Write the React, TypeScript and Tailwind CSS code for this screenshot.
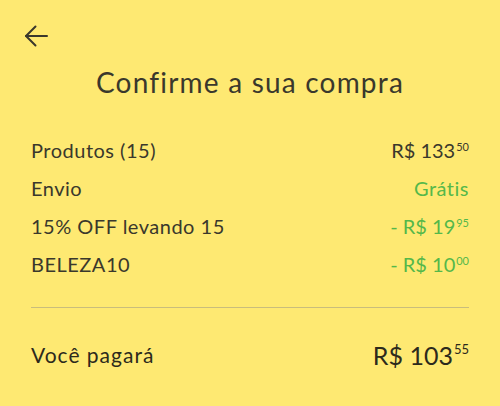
import React from 'react';

const Price = ({ value, cents, prefix = '', className = '', supClass = 'text-[11px]' }: { value: string; cents: string; prefix?: string; className?: string; supClass?: string }) => (
    <span className={`flex items-start tracking-normal ${className}`}>
        <span>{prefix}R$ {value}</span>
        <span className={`${supClass} leading-none mt-[2px] ml-[1px]`}>{cents}</span>
    </span>
);

export default function App() {
    const rows = [
        { label: 'Produtos (15)', right: <Price value="133" cents="50" className="text-[#3a382c]" /> },
        { label: 'Envio', right: <span className="text-[#55b84a] tracking-[0.5px]">Grátis</span> },
        { label: '15% OFF levando 15', right: <Price prefix="- " value="19" cents="95" className="text-[#55b84a]" /> },
        { label: 'BELEZA10', right: <Price prefix="- " value="10" cents="00" className="text-[#55b84a]" /> },
    ];

    return (
        <div className="w-[500px] h-[406px] bg-[#fee972] text-[#3a382c] overflow-hidden" style={{ fontFamily: 'Lato, "Open Sans", sans-serif' }}>
            {/* Back arrow */}
            <div className="pt-[24px] pl-[24px]">
                <svg width="24" height="24" viewBox="0 0 24 24" fill="none" stroke="#3a382c" strokeWidth="2" strokeLinecap="round" strokeLinejoin="round">
                    <path d="M2 12h21" />
                    <path d="M11.5 2.5 2 12l9.5 9.5" />
                </svg>
            </div>

            <h1 className="text-center text-[28px] tracking-[1.2px] leading-none mt-[20px]">Confirme a sua compra</h1>

            <div className="px-[31px] mt-[43px]">
                <div className="flex flex-col gap-[16px]">
                    {rows.map((r) => (
                        <div key={r.label} className="flex justify-between items-center text-[20px] leading-[22px]">
                            <span className="tracking-[0.5px]">{r.label}</span>
                            {r.right}
                        </div>
                    ))}
                </div>

                <div className="h-px bg-[#c9bd7c] mt-[32px]" />

                <div className="flex justify-between items-center mt-[31px]">
                    <span className="text-[21px] tracking-[1px] text-[#2c2a1c]">Você pagará</span>
                    <Price value="103" cents="55" className="text-[25px] leading-[28px] text-[#2c2a1c]" supClass="text-[13px]" />
                </div>
            </div>
        </div>
    );
}
